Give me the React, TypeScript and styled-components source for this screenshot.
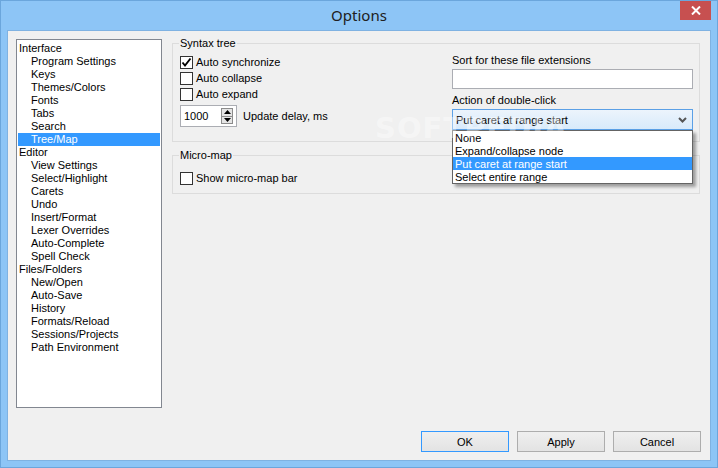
import React from "react";
import styled, { createGlobalStyle } from "styled-components";

const GlobalStyle = createGlobalStyle`
  html, body {
    margin: 0;
    padding: 0;
    background: #ffffff;
  }
  * {
    box-sizing: border-box;
  }
`;

const Window = styled.div`
  position: relative;
  width: 718px;
  height: 468px;
  display: flex;
  flex-direction: column;
  background: #8dc5f6;
  border: 1px solid #6ba6dc;
  font-family: "Liberation Sans", Arial, sans-serif;
  font-size: 11px;
  color: #000;
  overflow: hidden;
`;

const TitleBar = styled.div`
  height: 30px;
  display: grid;
  grid-template-columns: 1fr auto 1fr;
  align-items: start;
`;

const Title = styled.div`
  grid-column: 2;
  font-family: "Noto Sans", "Open Sans", sans-serif;
  font-size: 15px;
  line-height: 28px;
  color: #202020;
`;

const CloseButton = styled.div`
  grid-column: 3;
  justify-self: end;
  width: 31px;
  height: 19px;
  margin-right: 6px;
  background: #c75050;
  display: flex;
  align-items: center;
  justify-content: center;
`;

const Client = styled.div`
  flex: 1;
  margin: 0 7px 7px 7px;
  background: #f0f0f0;
  padding: 8px;
  display: flex;
  flex-direction: column;
  box-shadow: 0 0 0 1px #7fb2e2;
`;

const TopRow = styled.div`
  display: flex;
  align-items: flex-start;
  gap: 10px;
`;

const TreeList = styled.div`
  width: 146px;
  height: 369px;
  flex: none;
  background: #fff;
  border: 1px solid #828790;
  padding: 2px 1px 1px 1px;
`;

const TreeItem = styled.div<{ $child?: boolean; $selected?: boolean }>`
  height: 13px;
  line-height: 13px;
  padding-left: ${(p) => (p.$child ? 13 : 1)}px;
  white-space: nowrap;
  background: ${(p) => (p.$selected ? "#3399ff" : "transparent")};
  color: ${(p) => (p.$selected ? "#fff" : "#000")};
`;

const RightPanel = styled.div`
  flex: 1;
  margin-top: -2px;
  margin-right: 2px;
  display: flex;
  flex-direction: column;
  gap: 7px;
`;

const GroupBox = styled.fieldset`
  margin: 0;
  padding: 0;
  min-width: 0;
  border: 1px solid #dcdcdc;
`;

const Legend = styled.legend`
  margin-left: 6px;
  padding: 0 1px;
  line-height: 13px;
  font-size: 11px;
`;

const SyntaxBody = styled.div`
  display: flex;
  justify-content: space-between;
  padding: 0 6px 0 7px;
`;

const LeftColumn = styled.div`
  padding-top: 4px;
  padding-bottom: 14px;
  display: flex;
  flex-direction: column;
`;

const RightColumn = styled.div`
  width: 241px;
  display: flex;
  flex-direction: column;
`;

const CheckRow = styled.div`
  height: 16px;
  display: flex;
  align-items: center;
  gap: 3px;
  white-space: nowrap;
`;

const CheckBox = styled.div`
  width: 13px;
  height: 13px;
  border: 1px solid #333;
  background: #fff;
  display: flex;
  align-items: center;
  justify-content: center;
`;

const SpinRow = styled.div`
  margin-top: 3px;
  display: flex;
  align-items: center;
  gap: 6px;
`;

const SpinEdit = styled.div`
  width: 57px;
  height: 22px;
  border: 1px solid #abadb3;
  background: #fff;
  display: flex;
  align-items: center;
  justify-content: space-between;
  padding: 0 3px 0 3px;
`;

const SpinButtons = styled.div`
  width: 12px;
  height: 16px;
  border: 1px solid #8c8c8c;
  background: #e5e5e5;
  display: flex;
  flex-direction: column;
`;

const SpinHalf = styled.div<{ $bottom?: boolean }>`
  flex: 1;
  display: flex;
  align-items: center;
  justify-content: center;
  border-top: ${(p) => (p.$bottom ? "1px solid #8c8c8c" : "none")};
`;

const FieldLabel = styled.div<{ $top: number }>`
  margin-top: ${(p) => p.$top}px;
  line-height: 14px;
  white-space: nowrap;
`;

const TextEdit = styled.div`
  margin-top: 2px;
  height: 20px;
  border: 1px solid #abadb3;
  background: #fff;
`;

const Combo = styled.div`
  position: relative;
  margin-top: 2px;
  height: 21px;
  border: 1px solid #5ba0e6;
  background: linear-gradient(#ecf4fc, #d8eafb);
  display: flex;
  align-items: center;
  justify-content: space-between;
  padding: 0 5px 0 3px;
`;

const DropList = styled.div`
  position: absolute;
  top: calc(100% + 1px);
  left: -1px;
  width: calc(100% + 2px);
  background: #fff;
  border: 1px solid #646464;
  box-shadow: 3px 3px 3px rgba(0, 0, 0, 0.35);
  z-index: 2;
`;

const DropItem = styled.div<{ $selected?: boolean }>`
  height: 13px;
  line-height: 14px;
  padding-left: 2px;
  white-space: nowrap;
  background: ${(p) => (p.$selected ? "#3399ff" : "transparent")};
  color: ${(p) => (p.$selected ? "#fff" : "#000")};
`;

const MicroBody = styled.div`
  padding: 8px 0 7px 7px;
`;

const ButtonRow = styled.div`
  margin-top: auto;
  margin-right: 1px;
  display: flex;
  justify-content: flex-end;
  gap: 8px;
`;

const DialogButton = styled.div<{ $default?: boolean }>`
  width: 88px;
  height: 21px;
  border: 1px solid ${(p) => (p.$default ? "#3399ff" : "#adadad")};
  background: linear-gradient(#efefef, #e3e3e3);
  display: flex;
  align-items: center;
  justify-content: center;
`;

const Watermark = styled.div`
  position: absolute;
  left: 374px;
  top: 110px;
  font-family: "DejaVu Sans", sans-serif;
  font-weight: bold;
  font-size: 29px;
  letter-spacing: 1px;
  color: rgba(255, 255, 255, 0.4);
  pointer-events: none;
  z-index: 3;
`;

const tree: Array<[string, boolean]> = [
  ["Interface", false],
  ["Program Settings", true],
  ["Keys", true],
  ["Themes/Colors", true],
  ["Fonts", true],
  ["Tabs", true],
  ["Search", true],
  ["Tree/Map", true],
  ["Editor", false],
  ["View Settings", true],
  ["Select/Highlight", true],
  ["Carets", true],
  ["Undo", true],
  ["Insert/Format", true],
  ["Lexer Overrides", true],
  ["Auto-Complete", true],
  ["Spell Check", true],
  ["Files/Folders", false],
  ["New/Open", true],
  ["Auto-Save", true],
  ["History", true],
  ["Formats/Reload", true],
  ["Sessions/Projects", true],
  ["Path Environment", true],
];

const actions = [
  "None",
  "Expand/collapse node",
  "Put caret at range start",
  "Select entire range",
];

function Check({ checked }: { checked?: boolean }) {
  return (
    <CheckBox>
      {checked ? (
        <svg width="11" height="11" viewBox="0 0 11 11">
          <path d="M1.5 5.5 L4 8.5 L9.5 1.5" fill="none" stroke="#000" strokeWidth="1.9" />
        </svg>
      ) : null}
    </CheckBox>
  );
}

export default function App() {
  return (
    <>
      <GlobalStyle />
      <Window>
        <TitleBar>
          <Title>Options</Title>
          <CloseButton>
            <svg width="10" height="9" viewBox="0 0 10 9">
              <path d="M1 0.5 L9 8.5 M9 0.5 L1 8.5" stroke="#fff" strokeWidth="2" />
            </svg>
          </CloseButton>
        </TitleBar>
        <Client>
          <TopRow>
            <TreeList>
              {tree.map(([label, child]) => (
                <TreeItem key={label} $child={child} $selected={label === "Tree/Map"}>
                  {label}
                </TreeItem>
              ))}
            </TreeList>
            <RightPanel>
              <GroupBox>
                <Legend>Syntax tree</Legend>
                <SyntaxBody>
                  <LeftColumn>
                    <CheckRow>
                      <Check checked />
                      Auto synchronize
                    </CheckRow>
                    <CheckRow>
                      <Check />
                      Auto collapse
                    </CheckRow>
                    <CheckRow>
                      <Check />
                      Auto expand
                    </CheckRow>
                    <SpinRow>
                      <SpinEdit>
                        <span>1000</span>
                        <SpinButtons>
                          <SpinHalf>
                            <svg width="7" height="4" viewBox="0 0 7 4">
                              <path d="M0 4 L3.5 0 L7 4 Z" fill="#000" />
                            </svg>
                          </SpinHalf>
                          <SpinHalf $bottom>
                            <svg width="7" height="4" viewBox="0 0 7 4">
                              <path d="M0 0 L7 0 L3.5 4 Z" fill="#000" />
                            </svg>
                          </SpinHalf>
                        </SpinButtons>
                      </SpinEdit>
                      <span>Update delay, ms</span>
                    </SpinRow>
                  </LeftColumn>
                  <RightColumn>
                    <FieldLabel $top={3}>Sort for these file extensions</FieldLabel>
                    <TextEdit />
                    <FieldLabel $top={4}>Action of double-click</FieldLabel>
                    <Combo>
                      <span>Put caret at range start</span>
                      <svg width="9" height="6" viewBox="0 0 9 6">
                        <path d="M1 1 L4.5 4.5 L8 1" fill="none" stroke="#555" strokeWidth="2" />
                      </svg>
                      <DropList>
                        {actions.map((a) => (
                          <DropItem key={a} $selected={a === "Put caret at range start"}>
                            {a}
                          </DropItem>
                        ))}
                      </DropList>
                    </Combo>
                  </RightColumn>
                </SyntaxBody>
              </GroupBox>
              <GroupBox>
                <Legend>Micro-map</Legend>
                <MicroBody>
                  <CheckRow>
                    <Check />
                    Show micro-map bar
                  </CheckRow>
                </MicroBody>
              </GroupBox>
            </RightPanel>
          </TopRow>
          <ButtonRow>
            <DialogButton $default>OK</DialogButton>
            <DialogButton>Apply</DialogButton>
            <DialogButton>Cancel</DialogButton>
          </ButtonRow>
        </Client>
        <Watermark>SOFTPEDIA</Watermark>
      </Window>
    </>
  );
}
